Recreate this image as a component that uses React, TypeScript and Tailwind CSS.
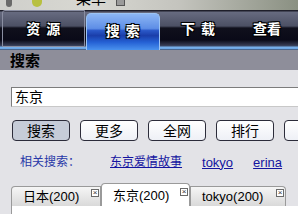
export default function App() {
  const tabText =
    "text-white font-bold text-[14px] leading-none [text-shadow:1px_1px_0_#000,-1px_-1px_0_#000,1px_-1px_0_#000,-1px_1px_0_#000,0_0_2px_#000]";
  const closeBox = (
    <span className="flex items-center justify-center w-[8px] h-[8px] border border-[#6a6a6a] bg-white text-[8px] leading-none text-[#333]">
      ×
    </span>
  );
  return (
    <div className="w-[298px] h-[214px] overflow-hidden bg-[#e3e3e7] font-['Liberation_Sans','Noto_Sans_CJK_SC',sans-serif] flex flex-col">
      {/* top strip */}
      <div className="h-[10px] shrink-0 bg-[linear-gradient(to_right,#cfcfcb,#d8d8d2_30%,#c4c4be_60%,#8a9082)] flex items-end overflow-hidden">
        <span className="ml-[6px] w-[6px] h-[7px] self-start bg-[#6a6a6a] rounded-b-[3px]" />
        <span className="ml-[20px] w-[10px] h-[7px] self-start bg-[#b8c040] rounded-b-full" />
        <span className="ml-[34px] text-[15px] leading-[15px] text-black h-[10px] overflow-hidden flex items-end">
          <span className="block translate-y-[-4px]">菜单</span>
        </span>
        <span className="ml-[10px] w-[9px] h-[6px] self-start border border-[#555] border-t-0 bg-[#9a9a9a]" />
      </div>
      {/* main tab bar */}
      <div className="h-[40px] shrink-0 flex items-end bg-[linear-gradient(to_bottom,#1e1e2a_0px,#1e1e2a_1px,#676b80_2px,#4c5064_16px,#10101c_18px,#0a0a18_30px,#34384f_35px,#3c4866_36px,#7ab2ec_37px,#6aa2e2_39px,#2a2a38_40px)]">
        <div className="ml-[2px] w-[89px] h-[37px] mb-[3px] border border-[#8a8ea2] rounded-tl-[3px] flex items-center justify-center gap-[6px]">
          <span className={tabText}>资</span>
          <span className={tabText}>源</span>
        </div>
        <div className="ml-[1px] w-[80px] h-[37px] border border-[#9cc4f4] border-b-0 rounded-t-[5px] bg-[linear-gradient(to_bottom,#8cb6f4_0%,#5e8ee6_40%,#2a58c8_46%,#1a3eaa_60%,#2460d4_78%,#4a92ee_100%)] flex items-center justify-center gap-[6px] pb-[2px]">
          <span className={tabText}>搜</span>
          <span className={tabText}>索</span>
        </div>
        <div className="w-[82px] h-[37px] mb-[3px] flex items-center justify-center gap-[6px]">
          <span className={tabText}>下</span>
          <span className={tabText}>载</span>
        </div>
        <div className="w-[62px] shrink-0 h-[37px] mb-[3px] flex items-center justify-center">
          <span className={tabText}>查看</span>
        </div>
      </div>
      {/* section header */}
      <div className="h-[20px] shrink-0 bg-[#8e8e9a] flex items-center pl-[10px]">
        <span className="text-[15px] font-bold text-black leading-none">搜索</span>
      </div>
      {/* input */}
      <div className="mt-[17px] ml-[11px] h-[20px] shrink-0 bg-white border border-[#7c7c7c] border-r-0 border-b-[#c8c8c8] flex items-center pl-[3px]">
        <span className="text-[14px] leading-none text-black">东京</span>
      </div>
      {/* buttons */}
      <div className="mt-[13px] ml-[12px] flex gap-[10px] shrink-0">
        {["搜索", "更多", "全网", "排行", "关于"].map((t, i) => (
          <div
            key={t}
            className={
              "w-[58px] h-[21px] shrink-0 rounded-[4px] border border-[#2c2c3a] flex items-center justify-center text-[14px] leading-none text-black " +
              (i === 0
                ? "bg-[#c6ccd8]"
                : "bg-[linear-gradient(to_bottom,#ffffff,#eef0f6)]")
            }
          >
            {t}
          </div>
        ))}
      </div>
      {/* related */}
      <div className="mt-[14px] ml-[20px] flex items-center h-[14px] shrink-0 whitespace-nowrap">
        <span className="text-[12px] leading-none text-[#2838a8]">相关搜索：</span>
        <span className="ml-[30px] text-[12px] leading-none text-[#1414a0] underline">东京爱情故事</span>
        <span className="ml-[20px] text-[13px] leading-none text-[#1414a0] underline">tokyo</span>
        <span className="ml-[20px] text-[13px] leading-none text-[#1414a0] underline">erina</span>
      </div>
      {/* result tabs */}
      <div className="mt-[14px] ml-[11px] flex items-end shrink-0 h-[23px] whitespace-nowrap">
        <div className="w-[90px] h-[20px] border border-[#9a9a9a] border-b-0 rounded-tl-[4px] bg-[linear-gradient(to_bottom,#f6f6f6,#d9d9d9)] flex items-start pl-[11px] pr-[1px] pt-[1px]">
          <span className="text-[13px] leading-[18px] text-black">日本(200)</span>
          <span className="ml-auto mt-[1px]">{closeBox}</span>
        </div>
        <div className="w-[89px] h-[23px] border border-[#9a9a9a] border-b-0 rounded-t-[4px] bg-white flex items-start pl-[11px] pr-[1px] pt-[3px]">
          <span className="text-[13px] leading-[18px] text-black">东京(200)</span>
          <span className="ml-auto mt-[1px]">{closeBox}</span>
        </div>
        <div className="w-[96px] h-[20px] border border-[#9a9a9a] border-b-0 rounded-tr-[4px] bg-[linear-gradient(to_bottom,#f6f6f6,#d9d9d9)] flex items-start pl-[11px] pr-[1px] pt-[1px]">
          <span className="text-[13px] leading-[18px] text-black">tokyo(200)</span>
          <span className="ml-auto mt-[1px]">{closeBox}</span>
        </div>
      </div>
      <div className="ml-[11px] flex-1 bg-white border-l border-[#9a9a9a]" />
    </div>
  );
}
